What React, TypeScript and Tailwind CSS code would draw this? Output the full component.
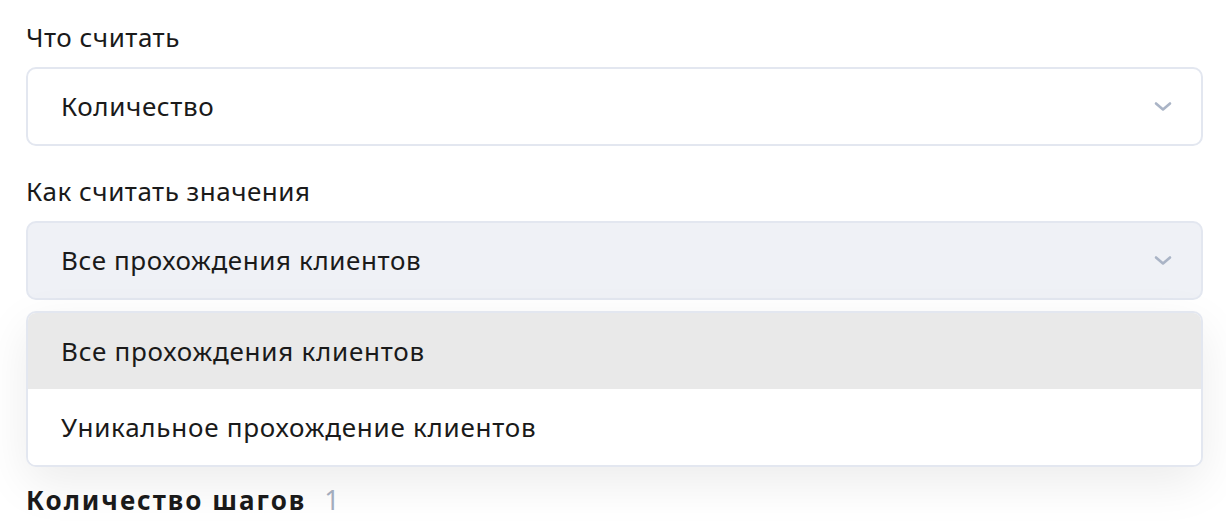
const font = { fontFamily: '"Noto Sans", "Open Sans", sans-serif' }

function Chevron() {
  return (
    <svg width="18" height="11" viewBox="0 0 18 11" fill="none" className="text-[#aab4c6]">
      <path d="M2 2.5 9 8.5 16 2.5" stroke="currentColor" strokeWidth="2.6" strokeLinecap="round" strokeLinejoin="round" />
    </svg>
  )
}

function Select({ value, open }: { value: string; open?: boolean }) {
  return (
    <div
      className={
        "mt-[14px] h-[79px] rounded-[10px] border-2 border-[#e3e7f0] flex items-center justify-between pl-[33px] pr-[29px] " +
        (open ? "bg-[#eff1f6]" : "bg-white")
      }
    >
      <span className="text-[26px] tracking-[0.6px] text-[#1a1a1a]">{value}</span>
      <Chevron />
    </div>
  )
}

export default function App() {
  const options = ["Все прохождения клиентов", "Уникальное прохождение клиентов"]

  return (
    <div className="min-h-screen bg-white pl-[26px] pr-[23px] pt-[21px]" style={font}>
      <label className="block text-[26px] tracking-[0.5px] leading-[32px] text-[#1a1a1a]">Что считать</label>
      <Select value="Количество" />

      <label className="block mt-[29px] text-[26px] tracking-[0.5px] leading-[32px] text-[#1a1a1a]">
        Как считать значения
      </label>
      <Select value="Все прохождения клиентов" open />

      <div className="mt-[11px] rounded-[10px] border-2 border-[#e3e7f0] bg-white overflow-hidden shadow-[0_16px_48px_rgba(0,0,0,0.08)]">
        {options.map((o, i) => (
          <div
            key={o}
            className={
              "h-[76px] flex items-center pl-[33px] text-[26px] tracking-[0.75px] text-[#1a1a1a] " +
              (i === 0 ? "bg-[#e9e9e9]" : "bg-white")
            }
          >
            {o}
          </div>
        ))}
      </div>

      <h2 className="mt-[17px] text-[26px] leading-[32px] font-bold tracking-[2px] text-[#1a1a1a] flex items-baseline gap-[18px]">
        Количество шагов
        <span className="font-normal tracking-normal text-[27px] text-[#a3acbd]">1</span>
      </h2>
    </div>
  )
}
